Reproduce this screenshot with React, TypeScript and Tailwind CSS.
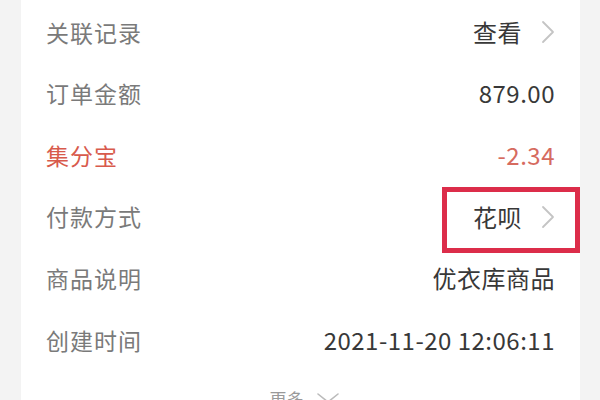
import React from "react";

type Row = {
  label: string;
  value: string;
  arrow?: boolean;
  red?: boolean;
  boxed?: boolean;
};

const rows: Row[] = [
  { label: "关联记录", value: "查看", arrow: true },
  { label: "订单金额", value: "879.00" },
  { label: "集分宝", value: "-2.34", red: true },
  { label: "付款方式", value: "花呗", arrow: true, boxed: true },
  { label: "商品说明", value: "优衣库商品" },
  { label: "创建时间", value: "2021-11-20 12:06:11" },
];

function Chevron() {
  return (
    <svg width="14" height="24" viewBox="0 0 14 24" fill="none" className="ml-[19px] shrink-0">
      <polyline points="2,2 12,12 2,22" stroke="#c4c4c4" strokeWidth="1.8" strokeLinecap="round" strokeLinejoin="round" />
    </svg>
  );
}

export default function App() {
  return (
    <div
      className="w-[600px] h-[400px] overflow-hidden bg-[#f3f3f3] flex"
      style={{ fontFamily: '"Noto Sans CJK SC", "Noto Sans", sans-serif' }}
    >
      <div className="ml-[21px] w-[559px] h-full bg-white pt-[1px] flex flex-col">
        {rows.map((row) => (
          <div key={row.label} className="relative h-[61.6px] shrink-0 flex items-center justify-between pl-[25px] pr-[25px]">
            <span className={`text-[23px] tracking-[1px] ${row.red ? "text-[#d85a4c]" : "text-[#7a7a7a]"}`}>
              {row.label}
            </span>
            <div className="flex items-center">
              <span className={`text-[24px] tracking-[0.5px] ${row.red ? "text-[#d66b5f]" : "text-[#383838]"}`}>{row.value}</span>
              {row.arrow && <Chevron />}
            </div>
            {row.boxed && (
              <div className="absolute right-0 top-[1px] w-[138px] h-[66px] border-[5px] border-[#dc2d4a]" />
            )}
          </div>
        ))}
        <div className="mt-[15px] flex items-center justify-center gap-[12px] pl-[8px]">
          <span className="text-[17px] text-[#999999]">更多</span>
          <svg width="24" height="12" viewBox="0 0 24 12" fill="none">
            <polyline points="2,2 12,10 22,2" stroke="#bbbbbb" strokeWidth="1.6" strokeLinecap="round" strokeLinejoin="round" />
          </svg>
        </div>
      </div>
    </div>
  );
}
